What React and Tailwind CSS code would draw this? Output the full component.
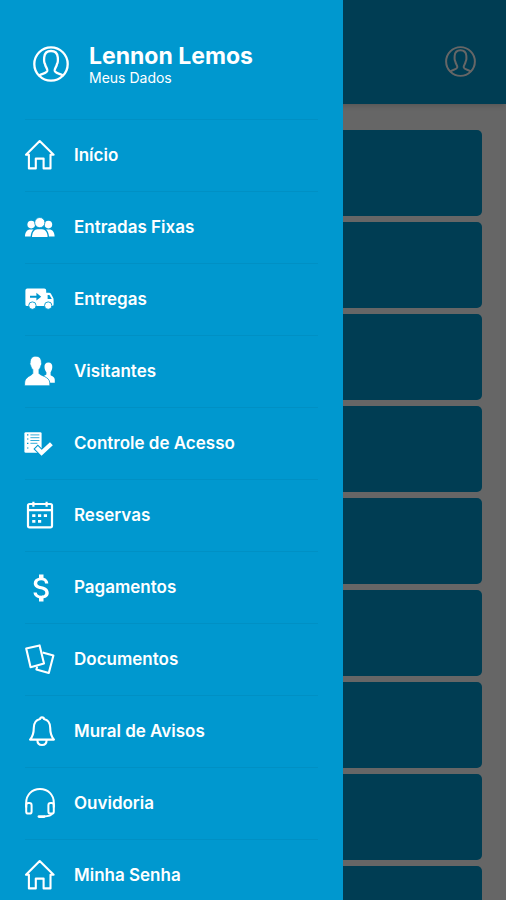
import { MdAttachMoney } from "react-icons/md";

const ProfileIcon = ({ className }) => (
  <svg viewBox="0 0 36 36" fill="none" stroke="currentColor" strokeWidth="2.3" className={className} aria-hidden="true">
    <circle cx="18" cy="18" r="16.7" />
    <path d="M5.6 30.2C8 27 13.6 28 14.3 24.8C14.7 22.6 12.6 21.4 12 18C10.8 16.4 11 13.8 11.2 11.4C11.6 7 14.2 5 18 5C21.8 5 24.4 7 24.8 11.4C25 13.8 25.2 16.4 24 18C23.4 21.4 21.3 22.6 21.7 24.8C22.4 28 28 27 30.4 30.2" />
  </svg>
);

const Icon = ({ children }) => (
  <svg viewBox="0 1 30 30" fill="none" stroke="none" className="size-[30px] shrink-0 overflow-visible" aria-hidden="true">
    {children}
  </svg>
);

const HomeIcon = () => (
  <Icon>
    <path
      d="M14.7 1L1 14.8H3.9V28.4H10.8V18.6H18.6V28.4H25.5V14.8H28.6Z"
      stroke="currentColor"
      strokeWidth="2.1"
      strokeLinejoin="round"
    />
  </Icon>
);

const GroupIcon = () => (
  <Icon>
    <g fill="currentColor">
      <circle cx="6.2" cy="12.6" r="3.8" />
      <circle cx="23.4" cy="12.6" r="3.8" />
      <path d="M0 24.6C0 20 2 17.4 5.5 17.4H8.5C6.8 19 5.8 21.5 5.6 24.6Z" />
      <path d="M29.6 24.6C29.6 20 27.6 17.4 24.1 17.4H21.1C22.8 19 23.8 21.5 24 24.6Z" />
      <circle cx="14.8" cy="10.6" r="5.1" stroke="#0098cf" strokeWidth="0.8" />
      <path d="M7 25C7 20.5 9.5 17.2 12.5 17.2H17.1C20.1 17.2 22.6 20.5 22.6 25Z" />
    </g>
  </Icon>
);

const TruckIcon = () => (
  <Icon>
    <path
      d="M2.3 4.4H19.2Q21.2 4.4 21.2 6.4V8.8H24.2Q25.2 8.8 25.8 9.6L28 13.6Q28.6 14.6 28.6 16V20.4Q28.6 22 27 22H2Q0.4 22 0.4 20.4V6.4Q0.4 4.4 2.3 4.4Z"
      fill="currentColor"
    />
    <path d="M5 11.7H11.4V8.8L16.2 12.7L11.4 16.6V13.7H5Z" fill="#0098cf" />
    <path d="M22.6 11H24.4L26.8 15H22.6Z" fill="#0098cf" />
    <circle cx="7.4" cy="21.6" r="3.7" fill="currentColor" stroke="#0098cf" strokeWidth="0.9" />
    <circle cx="23.2" cy="21.6" r="3.7" fill="currentColor" stroke="#0098cf" strokeWidth="0.9" />
  </Icon>
);

const VisitorsIcon = () => (
  <Icon>
    <path
      d="M23.4 6.6C26 6.6 27.4 8.4 27.3 11C27.2 13.4 26.4 15 25.6 16.2V19.2C27.6 20.4 29.8 21.2 29.8 24V26.8H22L18 20.4L21.4 18.6V16.2C20.4 15 19.6 13.4 19.5 11C19.4 8.4 20.8 6.6 23.4 6.6Z"
      fill="currentColor"
    />
    <path
      d="M10.8 0.2C14.6 0.2 16.6 2.8 16.4 6.6C16.8 7 16.8 8.6 16 9.4C15.6 11.4 14.8 12.6 14 13.6V17.4C15.2 19.8 24.8 20.6 24.8 27V29.8H-0.4V27C-0.4 20.6 6.6 19.8 7.8 17.4V13.6C6.8 12.6 6 11.4 5.6 9.4C4.8 8.6 4.8 7 5.2 6.6C5 2.8 7 0.2 10.8 0.2Z"
      fill="currentColor"
      stroke="#0098cf"
      strokeWidth="0.8"
    />
  </Icon>
);

const ChecklistIcon = () => (
  <Icon>
    <rect x="-0.6" y="4.2" width="17.2" height="20.6" rx="1.4" fill="currentColor" />
    <path d="M5.4 6.9H14.4M5.4 9.7H14.4M5.4 12.5H14.4M5.4 15.3H12.4" stroke="#0098cf" strokeWidth="0.8" />
    <path d="M2 6.9H3.4M2 11H3.4M2 15.3H3.4M2 20H3.4" stroke="#0098cf" strokeWidth="1.2" />
    <path d="M10.6 18.8L16.6 24.8L26.4 15.6" stroke="#0098cf" strokeWidth="6.2" />
    <path d="M11.4 19.6L16.6 24.8L26.4 15.8" stroke="currentColor" strokeWidth="4.2" />
  </Icon>
);

const CalendarIcon = () => (
  <Icon>
    <rect x="3" y="4" width="24" height="23.4" rx="1.6" stroke="currentColor" strokeWidth="2.2" />
    <path d="M3 10.1H27M8.4 1.8V6.8M21.6 1.8V6.8" stroke="currentColor" strokeWidth="2.2" />
    <path
      d="M7.2 15.6H10.4M13 15.6H16.2M18.8 15.6H22M7.2 21.4H10.4M13 21.4H16.2"
      stroke="currentColor"
      strokeWidth="2.8"
    />
  </Icon>
);

const MoneyIcon = () => (
  <Icon>
    <MdAttachMoney x="-1" y="-2" size={36} />
  </Icon>
);

const DocumentsIcon = () => (
  <Icon>
    <g stroke="currentColor" strokeWidth="2.1" strokeLinejoin="round">
      <path d="M1.2 4.6L14.6 1.4L19 19.6L5.6 23.2Z" />
      <path d="M17.6 8.6L28.4 11.6L23.8 29L11.4 25.4L12.2 22.4" />
    </g>
  </Icon>
);

const BellIcon = () => (
  <Icon>
    <g stroke="currentColor" strokeWidth="2.1" strokeLinejoin="round">
      <path d="M15 3C15 2 15.8 1.4 17 1.4C18.2 1.4 19 2 19 3C23 4 25.2 7.4 25.2 11.8C25.2 18 26 20.4 29 23.6H5C8 20.4 8.8 18 8.8 11.8C8.8 7.4 11 4 15 3Z" />
      <path d="M12.4 24C12.4 27.4 14.2 29 17 29C19.8 29 21.6 27.4 21.6 24" />
    </g>
  </Icon>
);

const HeadsetIcon = () => (
  <Icon>
    <g stroke="currentColor" strokeWidth="2">
      <path d="M1.2 19.4V14.8C1.2 6.8 7 1 15 1C23 1 28.8 6.8 28.8 14.8V19.4" />
      <rect x="1.2" y="15" width="5.4" height="10.6" rx="2.2" />
      <rect x="23.4" y="15" width="5.4" height="10.6" rx="2.2" />
      <path d="M27.4 25.4C26.4 27.4 23 28.4 19 28.4" />
      <path d="M14 28.6H19" strokeWidth="2.8" strokeLinecap="round" />
    </g>
  </Icon>
);

const menuItems = [
  { label: "Início", href: "#inicio", icon: HomeIcon },
  { label: "Entradas Fixas", href: "#entradas-fixas", icon: GroupIcon },
  { label: "Entregas", href: "#entregas", icon: TruckIcon },
  { label: "Visitantes", href: "#visitantes", icon: VisitorsIcon },
  { label: "Controle de Acesso", href: "#controle-de-acesso", icon: ChecklistIcon },
  { label: "Reservas", href: "#reservas", icon: CalendarIcon },
  { label: "Pagamentos", href: "#pagamentos", icon: MoneyIcon },
  { label: "Documentos", href: "#documentos", icon: DocumentsIcon },
  { label: "Mural de Avisos", href: "#mural-de-avisos", icon: BellIcon },
  { label: "Ouvidoria", href: "#ouvidoria", icon: HeadsetIcon },
  { label: "Minha Senha", href: "#minha-senha", icon: HomeIcon },
];

const App = () => {
  return (
    <div className="relative h-screen overflow-hidden bg-white font-['Inter',sans-serif] text-white">
      {/* Page under the drawer */}
      <header className="flex h-[104px] items-center justify-end bg-[#0098cf] px-[30px] pt-[18px] shadow-md">
        <button type="button" aria-label="Perfil">
          <ProfileIcon className="size-[31px]" />
        </button>
      </header>
      <main className="flex flex-col gap-1.5 px-6 pt-[26px]">
        {menuItems.slice(1).map((item) => (
          <div key={item.label} className="h-[86px] shrink-0 rounded-[5px] bg-[#0098cf]" />
        ))}
      </main>

      {/* Backdrop */}
      <div className="absolute inset-0 bg-black/60" />

      {/* Drawer */}
      <aside className="absolute inset-y-0 left-0 w-[67.8%] overflow-y-auto bg-[#0098cf] px-[25px] [scrollbar-width:none]">
        <a href="#meus-dados" className="flex h-[119px] items-center gap-5 pt-2 pl-2">
          <ProfileIcon className="size-9 shrink-0" />
          <span className="flex flex-col">
            <span className="text-[23px] leading-7 font-bold">Lennon Lemos</span>
            <span className="text-sm leading-4">Meus Dados</span>
          </span>
        </a>
        <nav>
          <ul>
            {menuItems.map(({ label, href, icon: ItemIcon }) => (
              <li key={label} className="border-t border-black/5">
                <a href={href} className="flex h-[71px] items-center gap-[19px]">
                  <ItemIcon />
                  <span className="text-[17px] font-semibold">{label}</span>
                </a>
              </li>
            ))}
          </ul>
        </nav>
      </aside>
    </div>
  );
};

export default App;
